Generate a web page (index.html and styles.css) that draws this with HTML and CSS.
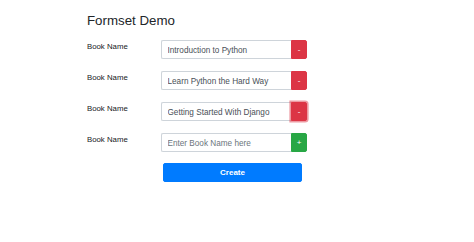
FILE: index.html
```html
<!DOCTYPE html>
<html>
<head>
<meta charset="utf-8">
<link rel="stylesheet" href="styles.css">
</head>
<body>
<div class="page">
  <h3 class="title">Formset Demo</h3>
  <form class="formset">
    <div class="row">
      <label class="label">Book Name</label>
      <div class="group">
        <input class="field" type="text" value="Introduction to Python">
        <button type="button" class="btn btn-danger">-</button>
      </div>
    </div>
    <div class="row">
      <label class="label">Book Name</label>
      <div class="group">
        <input class="field" type="text" value="Learn Python the Hard Way">
        <button type="button" class="btn btn-danger">-</button>
      </div>
    </div>
    <div class="row">
      <label class="label">Book Name</label>
      <div class="group">
        <input class="field" type="text" value="Getting Started With Django">
        <button type="button" class="btn btn-danger focused">-</button>
      </div>
    </div>
    <div class="row">
      <label class="label">Book Name</label>
      <div class="group">
        <input class="field" type="text" placeholder="Enter Book Name here">
        <button type="button" class="btn btn-success">+</button>
      </div>
    </div>
    <div class="actions">
      <button type="submit" class="create">Create</button>
    </div>
  </form>
</div>
</body>
</html>
```
FILE: styles.css
```css
html, body {
  margin: 0;
  padding: 0;
  background: #ffffff;
}
body {
  font-family: "Liberation Sans", Arial, sans-serif;
  color: #212529;
}
.page {
  padding: 13px 0 0 87px;
}
.title {
  margin: 0 0 11px 0;
  font-size: 13.3px;
  line-height: 16px;
  font-weight: 500;
  color: #212529;
}
.formset {
  display: flex;
  flex-direction: column;
  gap: 12px;
}
.row {
  display: flex;
  align-items: flex-start;
  height: 19px;
}
.label {
  width: 74px;
  font-size: 7.8px;
  line-height: 12px;
  padding-top: 0.5px;
  color: #16191c;
}
.group {
  display: flex;
  width: 146px;
  height: 19px;
}
.field {
  flex: 1;
  min-width: 0;
  box-sizing: border-box;
  height: 19px;
  margin: 0;
  padding: 1px 5.5px 0 5.5px;
  border: 1px solid #ced4da;
  border-right: none;
  border-radius: 2px 0 0 2px;
  font-family: "Liberation Sans", Arial, sans-serif;
  font-size: 8.2px;
  color: #495057;
  background: #fff;
  outline: none;
}
.field::placeholder {
  color: #6c757d;
}
.btn {
  width: 16px;
  height: 19px;
  box-sizing: border-box;
  margin: 0;
  padding: 0;
  border: 1px solid transparent;
  border-radius: 0 2px 2px 0;
  color: #fff;
  font-family: "Liberation Sans", Arial, sans-serif;
  font-size: 8px;
  line-height: 17px;
  text-align: center;
}
.btn-danger {
  background: #dc3545;
  border-color: #dc3545;
}
.btn-success {
  background: #28a745;
  border-color: #28a745;
}
.focused {
  box-shadow: 0 0 0 1.6px rgba(220, 53, 69, 0.5);
}
.actions {
  display: flex;
  padding-left: 76px;
  margin-top: -1px;
}
.create {
  width: 139px;
  height: 19px;
  box-sizing: border-box;
  margin: 0;
  padding: 0;
  border: 1px solid #007bff;
  border-radius: 2px;
  background: #007bff;
  color: #fff;
  font-family: "Liberation Sans", Arial, sans-serif;
  font-size: 8px;
  font-weight: 700;
}
```
